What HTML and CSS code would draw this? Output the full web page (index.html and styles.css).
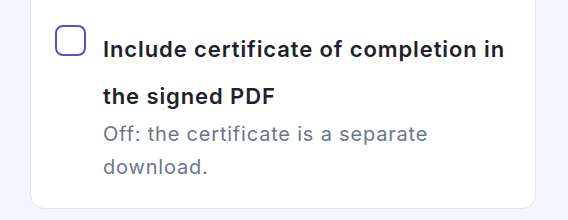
FILE: index.html
```html
<!DOCTYPE html>
<html>
<head>
<meta charset="utf-8">
<link rel="stylesheet" href="styles.css">
</head>
<body>
<div class="page">
  <div class="card">
    <label class="option">
      <span class="box"></span>
      <span class="text">
        <span class="title">Include certificate of completion in the signed PDF</span>
        <span class="hint">Off: the certificate is a separate download.</span>
      </span>
    </label>
  </div>
</div>
</body>
</html>
```
FILE: styles.css
```css
html, body {
  margin: 0;
  padding: 0;
  background: #f4f5fd;
  font-family: Inter, "Noto Sans", sans-serif;
}
.page {
  width: 568px;
  height: 220px;
  overflow: hidden;
  padding: 0 32px 0 30px;
  box-sizing: border-box;
}
.card {
  margin-top: -40px;
  background: #ffffff;
  border: 1px solid #e2e6f6;
  border-radius: 14px;
  padding: 64px 24px 24px 24px;
}
.option {
  display: flex;
  align-items: flex-start;
  gap: 17px;
}
.box {
  flex: none;
  width: 31px;
  height: 31px;
  box-sizing: border-box;
  border: 2px solid #5a4fc3;
  border-radius: 8px;
  background: #fff;
}
.text {
  flex: 1;
  display: flex;
  flex-direction: column;
  margin-top: 1px;
}
.title {
  font-size: 22px;
  font-weight: 600;
  line-height: 47px;
  letter-spacing: 0.9px;
  color: #1e222c;
}
.hint {
  font-size: 20px;
  line-height: 33px;
  letter-spacing: 0.8px;
  color: #6b768a;
  margin-top: -2px;
}
```
